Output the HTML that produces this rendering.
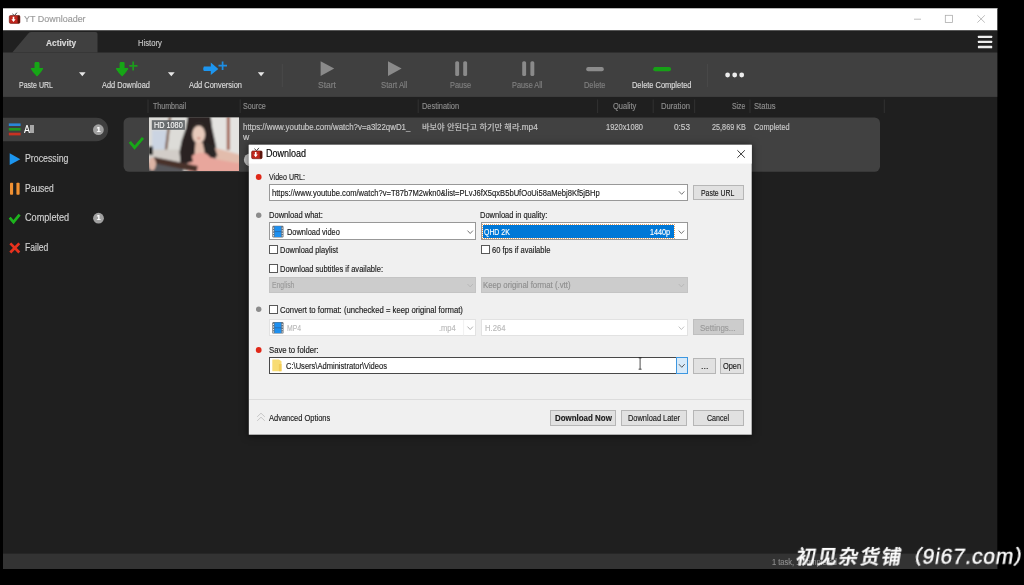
<!DOCTYPE html>
<html lang="en">
<head>
<meta charset="utf-8">
<title>YT Downloader</title>
<style>
html,body{margin:0;padding:0;background:#000;}
html{overflow:hidden;}
body{width:1024px;height:585px;position:relative;overflow:hidden;font-family:"Liberation Sans","Noto Sans CJK KR","NanumGothic",sans-serif;}
.a{position:absolute;}
.t{position:absolute;white-space:nowrap;line-height:12px;font-size:8.2px;-webkit-text-stroke:0.15px currentColor;transform-origin:0 50%;}
svg.layer{position:absolute;left:0;top:0;width:1024px;height:585px;overflow:hidden;}
.tx{position:absolute;left:0;top:0;width:1024px;height:585px;filter:grayscale(1) blur(0.25px);}
.btn{position:absolute;box-sizing:border-box;background:#e1e1e1;border:1px solid #b6b6b6;}
.inp{position:absolute;box-sizing:border-box;background:#fff;border:1px solid #989898;}
.dis{position:absolute;box-sizing:border-box;background:#cccccc;border:1px solid #c4c4c4;}
.cb{position:absolute;box-sizing:border-box;background:#fff;border:1px solid #585858;width:9px;height:9px;}
</style>
</head>
<body>
<!-- ===== main window ===== -->
<svg class="layer" id="mainsvg" viewBox="0 0 1024 585">
<defs>
<filter id="b05" x="-20%" y="-20%" width="140%" height="140%"><feGaussianBlur stdDeviation="0.45"/></filter>
<filter id="b1" x="-10%" y="-10%" width="120%" height="120%"><feGaussianBlur stdDeviation="1.1"/></filter>
<clipPath id="thclip"><rect x="149" y="117.5" width="90" height="53.6"/></clipPath>
</defs>
<!-- window chrome -->
<rect x="3" y="8" width="994.3" height="561" fill="#1f1f1f"/>
<rect x="3" y="8" width="994.3" height="22.5" fill="#ffffff"/>
<rect x="3" y="8" width="994.3" height="0.9" fill="#b0b0b0"/>
<rect x="3" y="30.5" width="994.3" height="22" fill="#202020"/>
<rect x="3" y="52.5" width="994.3" height="44.4" fill="#404040"/>
<rect x="3" y="553.6" width="994.3" height="15.4" fill="#333333"/>
<path d="M3 117.7 H96.4 A11.75 11.75 0 0 1 96.4 141.2 H3 Z" fill="#3e3e3e"/>
<rect x="123.6" y="117.4" width="756.4" height="54.4" rx="5.5" fill="#414141"/>
<!-- active tab -->
<path d="M12.3 52.6 L28.3 33.4 Q29.6 32 31.5 32 L95.5 32 Q97.5 32 97.5 34 L97.5 52.6 Z" fill="#404040"/>
<!-- title icon -->
<g filter="url(#b05)">
<path d="M12.4 13.9 L14.4 15.6 L16.9 12.7" fill="none" stroke="#2a2a2a" stroke-width="0.9"/>
<rect x="9.3" y="15.5" width="10.6" height="7.9" rx="1.3" fill="#c0261c" stroke="#6a1812" stroke-width="0.6"/>
<rect x="17.6" y="15.6" width="2.3" height="7.7" rx="0.8" fill="#5a1410"/>
<path d="M12.7 16.8 h1.6 v2.5 h1.3 l-2.1 2.6 l-2.1 -2.6 h1.3 z" fill="#ffffff"/>
</g>
<!-- window controls -->
<g stroke="#a8a8a8" stroke-width="0.75" fill="none">
<path d="M914 19.2 H921"/>
<rect x="945.3" y="15.3" width="7.2" height="7.2"/>
<path d="M977.4 15.3 L984.8 22.6 M984.8 15.3 L977.4 22.6"/>
</g>
<!-- hamburger -->
<g fill="#ededed">
<rect x="977.9" y="35.7" width="14.3" height="2.4" rx="0.6"/>
<rect x="977.9" y="40.7" width="14.3" height="2.4" rx="0.6"/>
<rect x="977.9" y="45.8" width="14.3" height="2.5" rx="0.6"/>
</g>
<!-- toolbar icons -->
<g filter="url(#b05)">
<!-- paste url arrow -->
<path d="M34.5 63.2 Q34.5 61.9 35.8 61.9 H38.2 Q39.5 61.9 39.5 63.2 V68 H42.6 Q43.7 68.2 43 69.3 Q40.6 73 37.6 76 Q37 76.6 36.4 76 Q33.4 73 31 69.3 Q30.3 68.2 31.4 68 H34.5 Z" fill="#14a614"/>
<!-- add download -->
<path transform="translate(85.1 0)" d="M34.5 63.2 Q34.5 61.9 35.8 61.9 H38.2 Q39.5 61.9 39.5 63.2 V68 H42.6 Q43.7 68.2 43 69.3 Q40.6 73 37.6 76 Q37 76.6 36.4 76 Q33.4 73 31 69.3 Q30.3 68.2 31.4 68 H34.5 Z" fill="#14a614"/>
<path d="M129.2 65.9 H137.5 M133.2 61.5 V70.6" stroke="#1a9c1a" stroke-width="1.7" fill="none"/>
<!-- add conversion -->
<path d="M203.8 66.6 h7 v-4 l7.5 6.3 l-7.5 6.2 v-4 h-7 q-1.2 -2.2 0 -4.5 z" fill="#1e96f0"/>
<path d="M218.5 65.7 H227 M222.6 61.5 V70" stroke="#1e8ee4" stroke-width="1.7" fill="none"/>
<!-- dropdown triangles -->
<path d="M79 72.3 h6.6 l-3.3 4 z M167.9 72.3 h6.8 l-3.4 4 z M257.8 72.3 h6.6 l-3.3 4 z" fill="#e6e6e6"/>
<!-- start / start all -->
<path d="M320.6 61.2 L334.2 68.6 L320.6 76 Z" fill="#8a8a8a"/>
<path d="M388 61.2 L401.6 68.6 L388 76 Z" fill="#8a8a8a"/>
<!-- pause / pause all -->
<rect x="455.2" y="61.2" width="3.9" height="14.8" rx="1.6" fill="#8a8a8a"/>
<rect x="463.2" y="61.2" width="3.9" height="14.8" rx="1.6" fill="#8a8a8a"/>
<rect x="522.2" y="61.2" width="3.9" height="14.8" rx="1.6" fill="#8a8a8a"/>
<rect x="530.4" y="61.2" width="3.9" height="14.8" rx="1.6" fill="#8a8a8a"/>
<!-- delete / delete completed -->
<rect x="586.2" y="67" width="17.6" height="4.2" rx="2" fill="#8c8c8c"/>
<rect x="653.2" y="67" width="17.8" height="4.2" rx="2" fill="#18a018"/>
<!-- dots -->
<circle cx="727.6" cy="75" r="2.4" fill="#ececec"/>
<circle cx="734.7" cy="75" r="2.4" fill="#ececec"/>
<circle cx="741.7" cy="75" r="2.4" fill="#ececec"/>
</g>
<!-- toolbar separators -->
<path d="M282.3 64 V87 M707.6 64 V87" stroke="#4b4b4b" stroke-width="0.9" fill="none"/>
<!-- header separators -->
<path d="M148 99.5 V113 M240.2 99.5 V113 M418.2 99.5 V113 M597.6 99.5 V113 M653.2 99.5 V113 M694.7 99.5 V113 M750 99.5 V113 M884.3 99.5 V113" stroke="#343434" stroke-width="0.9" fill="none"/>
<!-- sidebar icons -->
<g filter="url(#b05)">
<rect x="8.8" y="123.4" width="11.8" height="2.6" fill="#2a86d8"/>
<rect x="8.8" y="128" width="11.8" height="2.6" fill="#209820"/>
<rect x="8.8" y="132.7" width="11.8" height="2.7" fill="#c83020"/>
<path d="M9.7 153.3 L20.3 159.2 L9.7 165 Z" fill="#1e96f0"/>
<rect x="10" y="182.8" width="3.1" height="12" rx="0.8" fill="#f09030"/>
<rect x="16.4" y="182.8" width="3.2" height="12" rx="0.8" fill="#f09030"/>
<path d="M9.7 217.7 L13.5 222.1 L19.6 214.7" stroke="#1eb41e" stroke-width="2.7" fill="none"/>
<path d="M10.3 243.4 L19.3 252.5 M19.3 243.4 L10.3 252.5" stroke="#e8301e" stroke-width="2.7" fill="none"/>
</g>
<circle cx="98.4" cy="129.7" r="5.4" fill="#a0a0a0"/>
<circle cx="98.5" cy="218.2" r="5.4" fill="#a0a0a0"/>
<circle cx="250.3" cy="159.8" r="6.4" fill="#c6c6c6" filter="url(#b05)"/>
<!-- row check -->
<path d="M129.8 141.9 L134.6 147.6 L143 137.9" stroke="#16a816" stroke-width="2.9" fill="none" filter="url(#b05)"/>
<!-- thumbnail -->
<g clip-path="url(#thclip)">
<rect x="149" y="117.5" width="90" height="53.6" fill="#d6d5d1"/>
<g filter="url(#b1)" transform="translate(149 117.5)">
<rect x="-2" y="-2" width="40" height="36" fill="#dddcd8"/>
<rect x="3" y="12.5" width="14.5" height="20" fill="#cbd4e2"/>
<path d="M20 -2 L22.4 -2 L18.2 32.5 L15.8 32.5 Z" fill="#7c5c4c"/>
<rect x="60" y="-2" width="32" height="40" fill="#e4e3e0"/>
<rect x="77.8" y="-2" width="3" height="34.5" fill="#a06050"/>
<rect x="-2" y="32" width="36" height="14" fill="#d2cdc8"/>
<!-- hair -->
<path d="M38.9 -2 L61.6 -2 L63.2 10.5 L65.8 22.5 L67.6 32 L63 41 L50 44 L44 46 L31.7 45.5 L30.4 34.5 L32.9 22.5 L37 10.5 Z" fill="#2a2422"/>
<!-- face -->
<ellipse cx="49.7" cy="17" rx="6.4" ry="9" fill="#e8cabb"/>
<path d="M41.5 11 Q45 3 50 4 Q56 4 58 12 Q54 7 50 8.2 Q45 8 41.5 11 Z" fill="#2e2725"/>
<ellipse cx="49.8" cy="20.8" rx="1.6" ry="0.9" fill="#c06a5c"/>
<!-- neck/chest -->
<path d="M46.5 25 L53.5 25 L56.5 38 L45.5 38 Z" fill="#e2bead"/>
<!-- top -->
<path d="M57 25 L66 28.5 L69.5 41 L55 41 Z" fill="#2a2727"/>
<!-- arm -->
<path d="M63 29.5 Q76 33 92 37.5 L92 48 L68 43 Z" fill="#e2bcac"/>
<!-- guitar body -->
<path d="M39 53.6 L39 45 Q40 37.5 50 35.5 Q58 34.5 62 40 Q70 43 92 46 L92 56 L39 56 Z" fill="#e8a69c"/>
<path d="M57.5 26 L65.5 29 L68.5 38.5 L61.5 40 L56.5 35 Z" fill="#292626"/>
<path d="M31 34 L33 24 L41 30 L44 44 L36 46.5 L31.5 45.5 Z" fill="#2a2422"/>
<!-- bottom-left dark -->
<rect x="-2" y="45.5" width="36" height="12" fill="#56565a"/>
<!-- neck -->
<path d="M5 39.6 L48.8 48.6 L47.6 54.4 L4.2 45.6 Z" fill="#48322b"/>
<!-- hand -->
<ellipse cx="3.2" cy="46.5" rx="3.8" ry="6.5" fill="#dcb4a4"/>
<rect x="-1" y="29" width="5" height="8.5" fill="#202020"/>
</g>
<rect x="151.8" y="120.2" width="33.1" height="9.6" fill="#565a5e" opacity="0.85"/>
</g>
</svg>

<div class="tx" id="maintext">
<span class="t" style="left:96.4px;top:123.6px;font-size:7.6px;font-weight:bold;color:#ffffff;">1</span>
<span class="t" style="left:96.5px;top:212.1px;font-size:7.6px;font-weight:bold;color:#ffffff;">1</span>
<span class="t" id="t0" style="left:24.00px;top:13px;font-size:8.9px;color:#9a9a9a;transform:scaleX(1.0096);">YT Downloader</span>
<span class="t" id="t1" style="left:45.75px;top:37px;font-size:8.6px;color:#dadada;font-weight:bold;transform:scaleX(0.9743);">Activity</span>
<span class="t" id="t2" style="left:137.50px;top:37px;font-size:8.7px;color:#c8c8c8;transform:scaleX(0.8786);">History</span>
<span class="t" id="t3" style="left:19.00px;top:79px;font-size:8.7px;color:#dcdcdc;transform:scaleX(0.8092);">Paste URL</span>
<span class="t" id="t4" style="left:101.60px;top:79px;font-size:8.7px;color:#dcdcdc;transform:scaleX(0.8476);">Add Download</span>
<span class="t" id="t5" style="left:189.00px;top:79px;font-size:8.7px;color:#dcdcdc;transform:scaleX(0.8572);">Add Conversion</span>
<span class="t" id="t6" style="left:318.00px;top:79px;font-size:8.7px;color:#808080;transform:scaleX(0.9804);">Start</span>
<span class="t" id="t7" style="left:380.50px;top:79px;font-size:8.7px;color:#808080;transform:scaleX(0.8852);">Start All</span>
<span class="t" id="t8" style="left:450.00px;top:79px;font-size:8.7px;color:#808080;transform:scaleX(0.8523);">Pause</span>
<span class="t" id="t9" style="left:512.00px;top:79px;font-size:8.7px;color:#808080;transform:scaleX(0.8417);">Pause All</span>
<span class="t" id="t10" style="left:583.50px;top:79px;font-size:8.7px;color:#808080;transform:scaleX(0.8557);">Delete</span>
<span class="t" id="t11" style="left:631.50px;top:79px;font-size:8.7px;color:#dcdcdc;transform:scaleX(0.8555);">Delete Completed</span>
<span class="t" id="t12" style="left:153.00px;top:100px;font-size:8.7px;color:#8e8e8e;transform:scaleX(0.8136);">Thumbnail</span>
<span class="t" id="t13" style="left:243.30px;top:100px;font-size:8.7px;color:#8e8e8e;transform:scaleX(0.8245);">Source</span>
<span class="t" id="t14" style="left:422.00px;top:100px;font-size:8.7px;color:#8e8e8e;transform:scaleX(0.8512);">Destination</span>
<span class="t" id="t15" style="left:612.50px;top:100px;font-size:8.7px;color:#8e8e8e;transform:scaleX(0.8615);">Quality</span>
<span class="t" id="t16" style="left:660.70px;top:100px;font-size:8.7px;color:#8e8e8e;transform:scaleX(0.8799);">Duration</span>
<span class="t" id="t17" style="left:732.00px;top:100px;font-size:8.7px;color:#8e8e8e;transform:scaleX(0.7926);">Size</span>
<span class="t" id="t18" style="left:753.70px;top:100px;font-size:8.7px;color:#8e8e8e;transform:scaleX(0.8766);">Status</span>
<span class="t" id="t19" style="left:24.30px;top:124px;font-size:10.2px;color:#ffffff;transform:scaleX(0.8739);">All</span>
<span class="t" id="t20" style="left:24.60px;top:153px;font-size:10.2px;color:#d2d2d2;transform:scaleX(0.8610);">Processing</span>
<span class="t" id="t21" style="left:24.60px;top:183px;font-size:10.2px;color:#d2d2d2;transform:scaleX(0.8333);">Paused</span>
<span class="t" id="t22" style="left:24.60px;top:212px;font-size:10.2px;color:#d2d2d2;transform:scaleX(0.8969);">Completed</span>
<span class="t" id="t23" style="left:24.60px;top:242px;font-size:10.2px;color:#d2d2d2;transform:scaleX(0.8432);">Failed</span>
<span class="t" id="t24" style="left:243.00px;top:121px;font-size:8.7px;color:#cacaca;transform:scaleX(0.9086);">https://www.youtube.com/watch?v=a3l22qwD1_</span>
<span class="t" id="t25" style="left:243.00px;top:131px;font-size:8.7px;color:#cacaca;">w</span>
<span class="t" id="t26" style="left:422.00px;top:121px;font-size:8.4px;color:#cacaca;transform:scaleX(0.9800);">바보야 안된다고 하기만 해라.mp4</span>
<span class="t" id="t27" style="left:606.00px;top:121px;font-size:8.7px;color:#cacaca;transform:scaleX(0.8605);">1920x1080</span>
<span class="t" id="t28" style="left:674.00px;top:121px;font-size:8.7px;color:#cacaca;transform:scaleX(0.9455);">0:53</span>
<span class="t" id="t29" style="left:711.50px;top:121px;font-size:8.7px;color:#cacaca;transform:scaleX(0.8354);">25,869 KB</span>
<span class="t" id="t30" style="left:753.70px;top:121px;font-size:8.7px;color:#cacaca;transform:scaleX(0.8473);">Completed</span>
<span class="t" id="t31" style="left:153.80px;top:120px;font-size:8.2px;color:#f4f4f4;transform:scaleX(0.8878);">HD 1080</span>
<span class="t" id="t32" style="left:771.50px;top:556px;font-size:8.4px;color:#8c8c8c;transform:scaleX(0.8950);">1 task, 1 completed</span>
</div>

<!-- ===== dialog ===== -->
<div class="a" id="dlg" style="left:249px;top:145px;width:502px;height:289px;background:#f0f0f0;box-shadow:0 1px 7px 1px rgba(0,0,0,0.55);"></div>
<svg class="layer" viewBox="0 0 1024 585"><rect x="248.8" y="144.8" width="502.9" height="289.9" fill="#f0f0f0"/><rect x="248.8" y="144.8" width="502.9" height="18.8" fill="#ffffff"/></svg>
<div class="a" style="left:248.8px;top:399.1px;width:502.6px;height:0.9px;background:#dcdcdc;"></div>

<!-- controls -->
<div class="inp" style="left:269.2px;top:184.4px;width:418.5px;height:16.2px;"></div>
<div class="btn" style="left:693px;top:184.9px;width:50.8px;height:15.6px;"></div>
<div class="inp" style="left:269.2px;top:222.4px;width:207.2px;height:17.9px;"></div>
<div class="inp" style="left:480.5px;top:222.4px;width:207.2px;height:17.9px;"></div>
<div class="a" style="left:483px;top:225px;width:190.8px;height:12.8px;background:#0078d7;outline:0.6px dotted #e8a060;outline-offset:-0.6px;"></div>
<div class="cb" style="left:269.3px;top:245.2px;"></div>
<div class="cb" style="left:480.6px;top:245.2px;"></div>
<div class="cb" style="left:269.3px;top:264.3px;"></div>
<div class="dis" style="left:269.2px;top:277.2px;width:207.2px;height:15.6px;"></div>
<div class="dis" style="left:480.5px;top:277.2px;width:207.2px;height:15.6px;"></div>
<div class="cb" style="left:269.3px;top:304.8px;"></div>
<div class="inp" style="left:269.2px;top:319.3px;width:207.2px;height:16.9px;border-color:#e2e2e2;"></div>
<div class="inp" style="left:480.5px;top:319.3px;width:207.2px;height:16.9px;border-color:#e2e2e2;"></div>
<div class="dis" style="left:693px;top:319.4px;width:50.8px;height:15.5px;border-color:#bfbfbf;"></div>
<div class="inp" style="left:269.2px;top:357.2px;width:418.5px;height:16.4px;border-color:#484848;"></div>
<div class="a" style="left:676.2px;top:357.2px;width:11.5px;height:16.4px;box-sizing:border-box;background:#d8eaf9;border:1px solid #3d97e0;"></div>
<div class="btn" style="left:693px;top:358px;width:23.2px;height:15.5px;"></div>
<div class="btn" style="left:720px;top:358px;width:23.8px;height:15.5px;"></div>
<div class="btn" style="left:550.2px;top:410.4px;width:65.8px;height:15.3px;"></div>
<div class="btn" style="left:621.3px;top:410.4px;width:65.8px;height:15.3px;"></div>
<div class="btn" style="left:693.3px;top:410.4px;width:50.5px;height:15.3px;"></div>

<svg class="layer" id="dlgsvg" viewBox="0 0 1024 585">
<!-- dialog icon -->
<g filter="url(#b05)">
<path d="M254.4 148.7 L256.6 150.7 L258.9 147.9" fill="none" stroke="#2a2a2a" stroke-width="0.9"/>
<rect x="251.6" y="150.9" width="10.5" height="7.8" rx="1.3" fill="#c0261c" stroke="#6a1812" stroke-width="0.6"/>
<rect x="259.8" y="151" width="2.3" height="7.6" rx="0.8" fill="#5a1410"/>
<path d="M254.9 152.1 h1.6 v2.5 h1.3 l-2.1 2.6 l-2.1 -2.6 h1.3 z" fill="#ffffff"/>
</g>
<!-- close -->
<path d="M737.4 150.3 L744.8 157.7 M744.8 150.3 L737.4 157.7" stroke="#222" stroke-width="0.9" fill="none"/>
<!-- bullets -->
<circle cx="258.7" cy="177" r="2.9" fill="#e02818"/>
<circle cx="258.7" cy="215.2" r="2.7" fill="#8c8c8c"/>
<circle cx="258.7" cy="309.2" r="2.7" fill="#8c8c8c"/>
<circle cx="258.7" cy="350" r="2.9" fill="#e02818"/>
<!-- chevrons -->
<g stroke="#555" stroke-width="0.8" fill="none">
<path d="M679 191.4 L681.7 194.3 L684.4 191.4"/>
<path d="M467.5 230.6 L470.2 233.5 L472.9 230.6"/>
<path d="M678.7 230.6 L681.4 233.5 L684.1 230.6"/>
<path d="M678.9 364.2 L681.8 367.3 L684.7 364.2" stroke="#333"/>
</g>
<g stroke="#b4b4b4" stroke-width="0.8" fill="none">
<path d="M467.5 284 L470.2 286.9 L472.9 284"/>
<path d="M678.7 284 L681.4 286.9 L684.1 284"/>
<path d="M467.5 326.6 L470.2 329.5 L472.9 326.6" stroke="#9a9a9a"/>
<path d="M678.7 326.6 L681.4 329.5 L684.1 326.6"/>
</g>
<!-- film icons -->
<g id="film1">
<rect x="272.3" y="225.7" width="11.2" height="11.8" rx="1.2" fill="#687078"/>
<rect x="274.5" y="226.2" width="6.8" height="10.8" fill="#1e90f0"/>
<path d="M273.5 227.6 v1.2 M273.5 230.2 v1.2 M273.5 232.8 v1.2 M273.5 235.2 v1.2 M282.3 227.6 v1.2 M282.3 230.2 v1.2 M282.3 232.8 v1.2 M282.3 235.2 v1.2" stroke="#e8e8e8" stroke-width="1"/>
<path d="M274.5 231.6 h6.8" stroke="#2a5a90" stroke-width="0.6"/>
</g>
<g id="film2">
<rect x="272.3" y="322" width="11.2" height="11.6" rx="1.2" fill="#687078"/>
<rect x="274.5" y="322.5" width="6.8" height="10.6" fill="#1e90f0"/>
<path d="M273.5 323.8 v1.2 M273.5 326.4 v1.2 M273.5 329 v1.2 M273.5 331.4 v1.2 M282.3 323.8 v1.2 M282.3 326.4 v1.2 M282.3 329 v1.2 M282.3 331.4 v1.2" stroke="#e8e8e8" stroke-width="1"/>
<path d="M274.5 327.8 h6.8" stroke="#2a5a90" stroke-width="0.6"/>
</g>
<!-- folder icon -->
<path d="M272.3 359.6 h6.6 l2.6 1.6 v10 h-9.2 z" fill="#f8dc74"/>
<path d="M278.9 364 h2.6 v7.2 h-2.6 z" fill="#f2cc58"/>
<!-- advanced chevrons -->
<g stroke="#bcbcbc" stroke-width="0.8" fill="none">
<path d="M257.2 416.8 L261 413.2 L264.8 416.8"/>
<path d="M257.2 420.8 L261 417.2 L264.8 420.8"/>
</g>
<!-- I-beam cursor -->
<path d="M638.6 357.8 h3 M638.6 369.2 h3 M640.1 357.8 v11.4" stroke="#222" stroke-width="0.8" fill="none"/>
<!-- mp4 combobox split -->
<path d="M463.6 320 V335.6" stroke="#ececec" stroke-width="0.8"/>
</svg>
<div class="tx" id="dlgtext">
<span class="t" id="t33" style="left:266.30px;top:148px;font-size:10.0px;color:#000000;transform:scaleX(0.8992);">Download</span>
<span class="t" id="t34" style="left:269.00px;top:171px;font-size:8.7px;color:#1a1a1a;transform:scaleX(0.8130);">Video URL:</span>
<span class="t" id="t35" style="left:272.00px;top:187px;font-size:8.7px;color:#1a1a1a;transform:scaleX(0.8748);">https://www.youtube.com/watch?v=T87b7M2wkn0&amp;list=PLvJ6fX5qxB5bUfOoUi58aMebj8Kf5jBHp</span>
<span class="t" id="t36" style="left:700.60px;top:187px;font-size:8.7px;color:#1a1a1a;transform:scaleX(0.7949);">Paste URL</span>
<span class="t" id="t37" style="left:269.00px;top:209px;font-size:8.7px;color:#1a1a1a;transform:scaleX(0.8693);">Download what:</span>
<span class="t" id="t38" style="left:480.25px;top:209px;font-size:8.7px;color:#1a1a1a;transform:scaleX(0.8648);">Download in quality:</span>
<span class="t" id="t39" style="left:286.50px;top:226px;font-size:8.7px;color:#1a1a1a;transform:scaleX(0.8556);">Download video</span>
<span class="t" id="t40" style="left:484.00px;top:226px;font-size:8.7px;color:#ffffff;transform:scaleX(0.7958);">QHD 2K</span>
<span class="t" id="t41" style="left:649.75px;top:226px;font-size:8.7px;color:#ffffff;transform:scaleX(0.8274);">1440p</span>
<span class="t" id="t42" style="left:280.00px;top:244px;font-size:8.7px;color:#1a1a1a;transform:scaleX(0.8579);">Download playlist</span>
<span class="t" id="t43" style="left:491.60px;top:244px;font-size:8.7px;color:#1a1a1a;transform:scaleX(0.8698);">60 fps if available</span>
<span class="t" id="t44" style="left:280.00px;top:263px;font-size:8.7px;color:#1a1a1a;transform:scaleX(0.8670);">Download subtitles if available:</span>
<span class="t" id="t45" style="left:272.00px;top:279px;font-size:8.7px;color:#9a9a9a;transform:scaleX(0.7860);">English</span>
<span class="t" id="t46" style="left:482.80px;top:279px;font-size:8.7px;color:#8e8e8e;transform:scaleX(0.8971);">Keep original format (.vtt)</span>
<span class="t" id="t47" style="left:280.00px;top:304px;font-size:8.7px;color:#1a1a1a;transform:scaleX(0.8881);">Convert to format: (unchecked = keep original format)</span>
<span class="t" id="t48" style="left:286.50px;top:322px;font-size:8.7px;color:#bababa;transform:scaleX(0.7888);">MP4</span>
<span class="t" id="t49" style="left:439.00px;top:322px;font-size:8.7px;color:#bababa;transform:scaleX(0.8640);">.mp4</span>
<span class="t" id="t50" style="left:484.50px;top:322px;font-size:8.7px;color:#bababa;transform:scaleX(0.8841);">H.264</span>
<span class="t" id="t51" style="left:699.75px;top:322px;font-size:8.7px;color:#9a9a9a;transform:scaleX(0.9187);">Settings...</span>
<span class="t" id="t52" style="left:269.00px;top:344px;font-size:8.7px;color:#1a1a1a;transform:scaleX(0.8879);">Save to folder:</span>
<span class="t" id="t53" style="left:286.00px;top:360px;font-size:8.7px;color:#1a1a1a;transform:scaleX(0.8692);">C:\Users\Administrator\Videos</span>
<span class="t" id="t54" style="left:700.60px;top:360px;font-size:8.7px;color:#1a1a1a;transform:scaleX(1.0207);">...</span>
<span class="t" id="t55" style="left:722.50px;top:360px;font-size:8.7px;color:#1a1a1a;transform:scaleX(0.8511);">Open</span>
<span class="t" id="t56" style="left:269.00px;top:412px;font-size:8.7px;color:#1a1a1a;transform:scaleX(0.8627);">Advanced Options</span>
<span class="t" id="t57" style="left:554.60px;top:412px;font-size:8.6px;color:#1a1a1a;font-weight:bold;transform:scaleX(0.9222);">Download Now</span>
<span class="t" id="t58" style="left:627.50px;top:412px;font-size:8.7px;color:#1a1a1a;transform:scaleX(0.8544);">Download Later</span>
<span class="t" id="t59" style="left:706.50px;top:412px;font-size:8.7px;color:#1a1a1a;transform:scaleX(0.8134);">Cancel</span>
</div>
<div class="a" id="wm" style="left:795.2px;top:542.3px;white-space:nowrap;color:#ffffff;line-height:30px;transform:skewX(-9deg);transform-origin:0 24px;filter:grayscale(1) blur(0.3px);-webkit-text-stroke:0.35px #ffffff;"><span style="font-family:'Liberation Sans','Noto Sans CJK SC',sans-serif;font-size:19.6px;font-weight:500;letter-spacing:1.7px;">初见杂货铺（</span><span id="wml" style="font-family:'Liberation Sans',sans-serif;font-size:21px;font-weight:400;letter-spacing:0.8px;margin-left:-1.5px;">9i67.com</span><span style="font-family:'Liberation Sans','Noto Sans CJK SC',sans-serif;font-size:19.6px;font-weight:500;margin-left:-0.4px;">）</span></div>

</body>
</html>
